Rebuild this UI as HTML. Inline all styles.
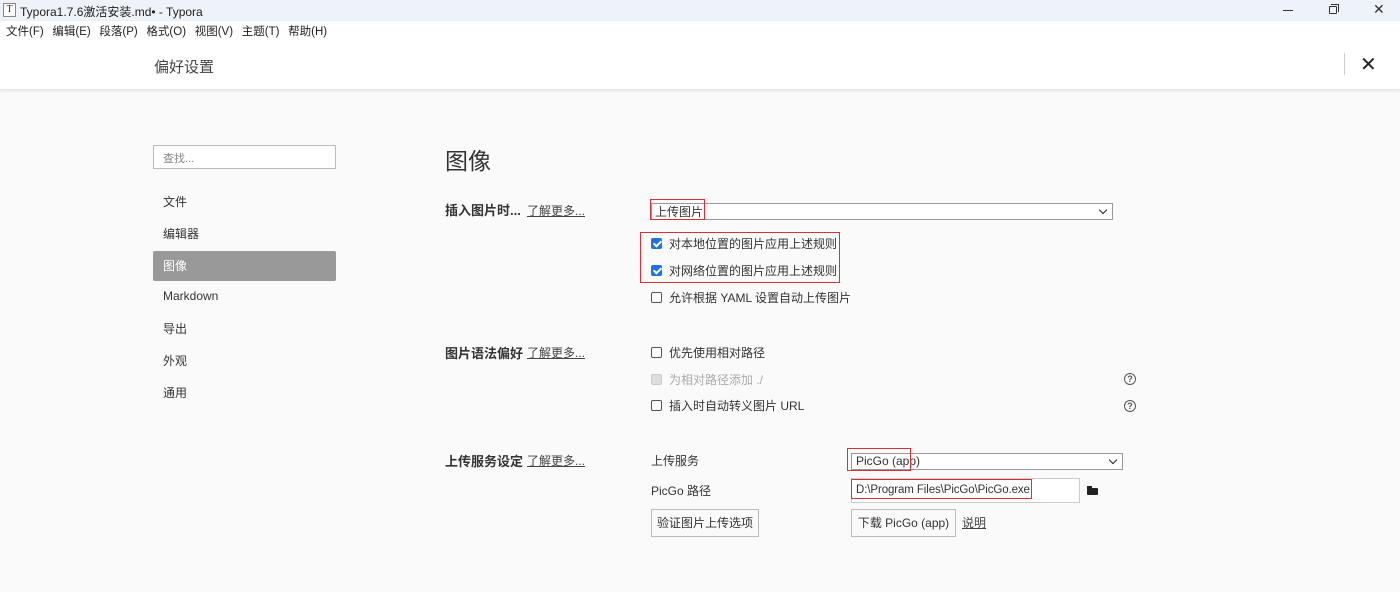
<!DOCTYPE html>
<html><head><meta charset="utf-8"><style>
*{margin:0;padding:0;box-sizing:border-box}
body{width:1400px;height:592px;overflow:hidden;background:#fafafa;font-family:"Liberation Sans","Noto Sans CJK SC",sans-serif;color:#333;position:relative}
.a{position:absolute;white-space:nowrap}
.t{font-size:12px;margin-top:-2px}
.lbl{font-size:13px;font-weight:bold;color:#333;margin-top:-3px}
.lk{font-size:12px;text-decoration:underline;color:#444;margin-top:-2px}
.cb{position:absolute;width:11px;height:11px;border:1px solid #555;border-radius:2px;background:#fff}
.cb.on{background:#1a73e8;border-color:#1a73e8}
.cb.on:after{content:"";position:absolute;left:3px;top:0px;width:3px;height:6px;border:solid #fff;border-width:0 2px 2px 0;transform:rotate(45deg)}
.red{position:absolute;border:1.5px solid #d0343a}
.sel{position:absolute;background:#fff;border:1px solid #999;height:17px}
.sel:after{content:"";position:absolute;right:6px;top:3px;width:5px;height:5px;border:solid #222;border-width:0 1.5px 1.5px 0;transform:rotate(45deg)}
.q{position:absolute;width:12px;height:12px;border:1.3px solid #555;border-radius:50%;font-size:9px;text-align:center;line-height:10px;color:#555;font-weight:bold}
.btn{position:absolute;border:1px solid #bbb;background:#fafafa;font-size:12px;text-align:center;line-height:26px}
</style></head><body>
<div class="a" style="left:0;top:0;width:1400px;height:21px;background:#eef2f9"></div>
<div class="a" style="left:3px;top:3px;width:13px;height:14px;border:1px solid #888;background:#fff;font-size:10px;text-align:center;line-height:12px;font-family:'Liberation Serif',serif">T</div>
<div class="a" style="left:20px;top:3px;font-size:12px;color:#222">Typora1.7.6激活安装.md• - Typora</div>
<div class="a" style="left:1283px;top:10px;width:10px;height:1px;background:#333"></div>
<div class="a" style="left:1329px;top:6px;width:8px;height:8px;border:1px solid #333;border-radius:1px"></div>
<div class="a" style="left:1331px;top:4px;width:8px;height:8px;border-top:1px solid #333;border-right:1px solid #333"></div>
<div class="a" style="left:1373px;top:1px;font-size:14px;color:#333">✕</div>
<div class="a" style="left:0;top:21px;width:1400px;height:69px;background:#fff;border-bottom:1px solid #e2e2e2;box-shadow:0 1px 3px rgba(0,0,0,.08)"></div>
<div class="a" style="left:6px;top:23px;font-size:11.5px;color:#222;word-spacing:5.5px">文件(F) 编辑(E) 段落(P) 格式(O) 视图(V) 主题(T) 帮助(H)</div>
<div class="a" style="left:154px;top:56px;font-size:15px;color:#444">偏好设置</div>
<div class="a" style="left:1344px;top:53px;width:1px;height:22px;background:#ccc"></div>
<div class="a" style="left:1360px;top:52px;font-size:20px;color:#222">✕</div>

<div class="a" style="left:153px;top:145px;width:183px;height:24px;border:1px solid #bbb;background:#fff;font-size:11px;color:#888;padding:4px 9px">查找...</div>
<div class="a t" style="left:163px;top:195px">文件</div>
<div class="a t" style="left:163px;top:227px">编辑器</div>
<div class="a" style="left:153px;top:251px;width:183px;height:30px;background:#999;border-radius:2px"></div>
<div class="a t" style="left:163px;top:259px;color:#fff">图像</div>
<div class="a t" style="left:163px;top:291px">Markdown</div>
<div class="a t" style="left:163px;top:322px">导出</div>
<div class="a t" style="left:163px;top:354px">外观</div>
<div class="a t" style="left:163px;top:386px">通用</div>

<div class="a" style="left:445px;top:142px;font-size:23px;color:#333">图像</div>

<div class="a lbl" style="left:445px;top:203px">插入图片时...</div>
<div class="a lk" style="left:527px;top:204px">了解更多...</div>
<div class="sel" style="left:651px;top:203px;width:462px"></div>
<div class="a t" style="left:655px;top:205px">上传图片</div>
<div class="red" style="left:650px;top:199px;width:55px;height:21px"></div>
<div class="cb on" style="left:651px;top:238px"></div>
<div class="a t" style="left:669px;top:237px">对本地位置的图片应用上述规则</div>
<div class="cb on" style="left:651px;top:265px"></div>
<div class="a t" style="left:669px;top:264px">对网络位置的图片应用上述规则</div>
<div class="red" style="left:640px;top:232px;width:200px;height:51px"></div>
<div class="cb" style="left:651px;top:292px"></div>
<div class="a t" style="left:669px;top:291px">允许根据 YAML 设置自动上传图片</div>

<div class="a lbl" style="left:445px;top:346px">图片语法偏好</div>
<div class="a lk" style="left:527px;top:346px">了解更多...</div>
<div class="cb" style="left:651px;top:347px"></div>
<div class="a t" style="left:669px;top:346px">优先使用相对路径</div>
<div class="cb" style="left:651px;top:374px;border-color:#ccc;background:#ddd"></div>
<div class="a t" style="left:669px;top:373px;color:#aaa">为相对路径添加 ./</div>
<div class="q" style="left:1124px;top:373px">?</div>
<div class="cb" style="left:651px;top:400px"></div>
<div class="a t" style="left:669px;top:399px">插入时自动转义图片 URL</div>
<div class="q" style="left:1124px;top:400px">?</div>

<div class="a lbl" style="left:445px;top:454px">上传服务设定</div>
<div class="a lk" style="left:527px;top:454px">了解更多...</div>
<div class="a t" style="left:651px;top:454px">上传服务</div>
<div class="sel" style="left:851px;top:453px;width:272px"></div>
<div class="a" style="left:856px;top:454px;font-size:12px">PicGo (app)</div>
<div class="red" style="left:847px;top:448px;width:64px;height:23px"></div>
<div class="a t" style="left:651px;top:484px">PicGo 路径</div>
<div class="a" style="left:851px;top:478px;width:229px;height:25px;background:#fff;border:1px solid #ccc"></div>
<div class="a" style="left:856px;top:484px;font-size:11.5px;letter-spacing:-0.1px">D:\Program Files\PicGo\PicGo.exe</div>
<div class="red" style="left:851px;top:479px;width:181px;height:20px"></div>
<div class="a" style="left:1087px;top:488px;width:11px;height:7px;background:#222;border-radius:1px"></div>
<div class="a" style="left:1087px;top:486px;width:5px;height:3px;background:#222"></div>
<div class="btn" style="left:651px;top:509px;width:108px;height:28px">验证图片上传选项</div>
<div class="btn" style="left:851px;top:509px;width:105px;height:28px">下载 PicGo (app)</div>
<div class="a lk" style="left:962px;top:516px">说明</div>
</body></html>
